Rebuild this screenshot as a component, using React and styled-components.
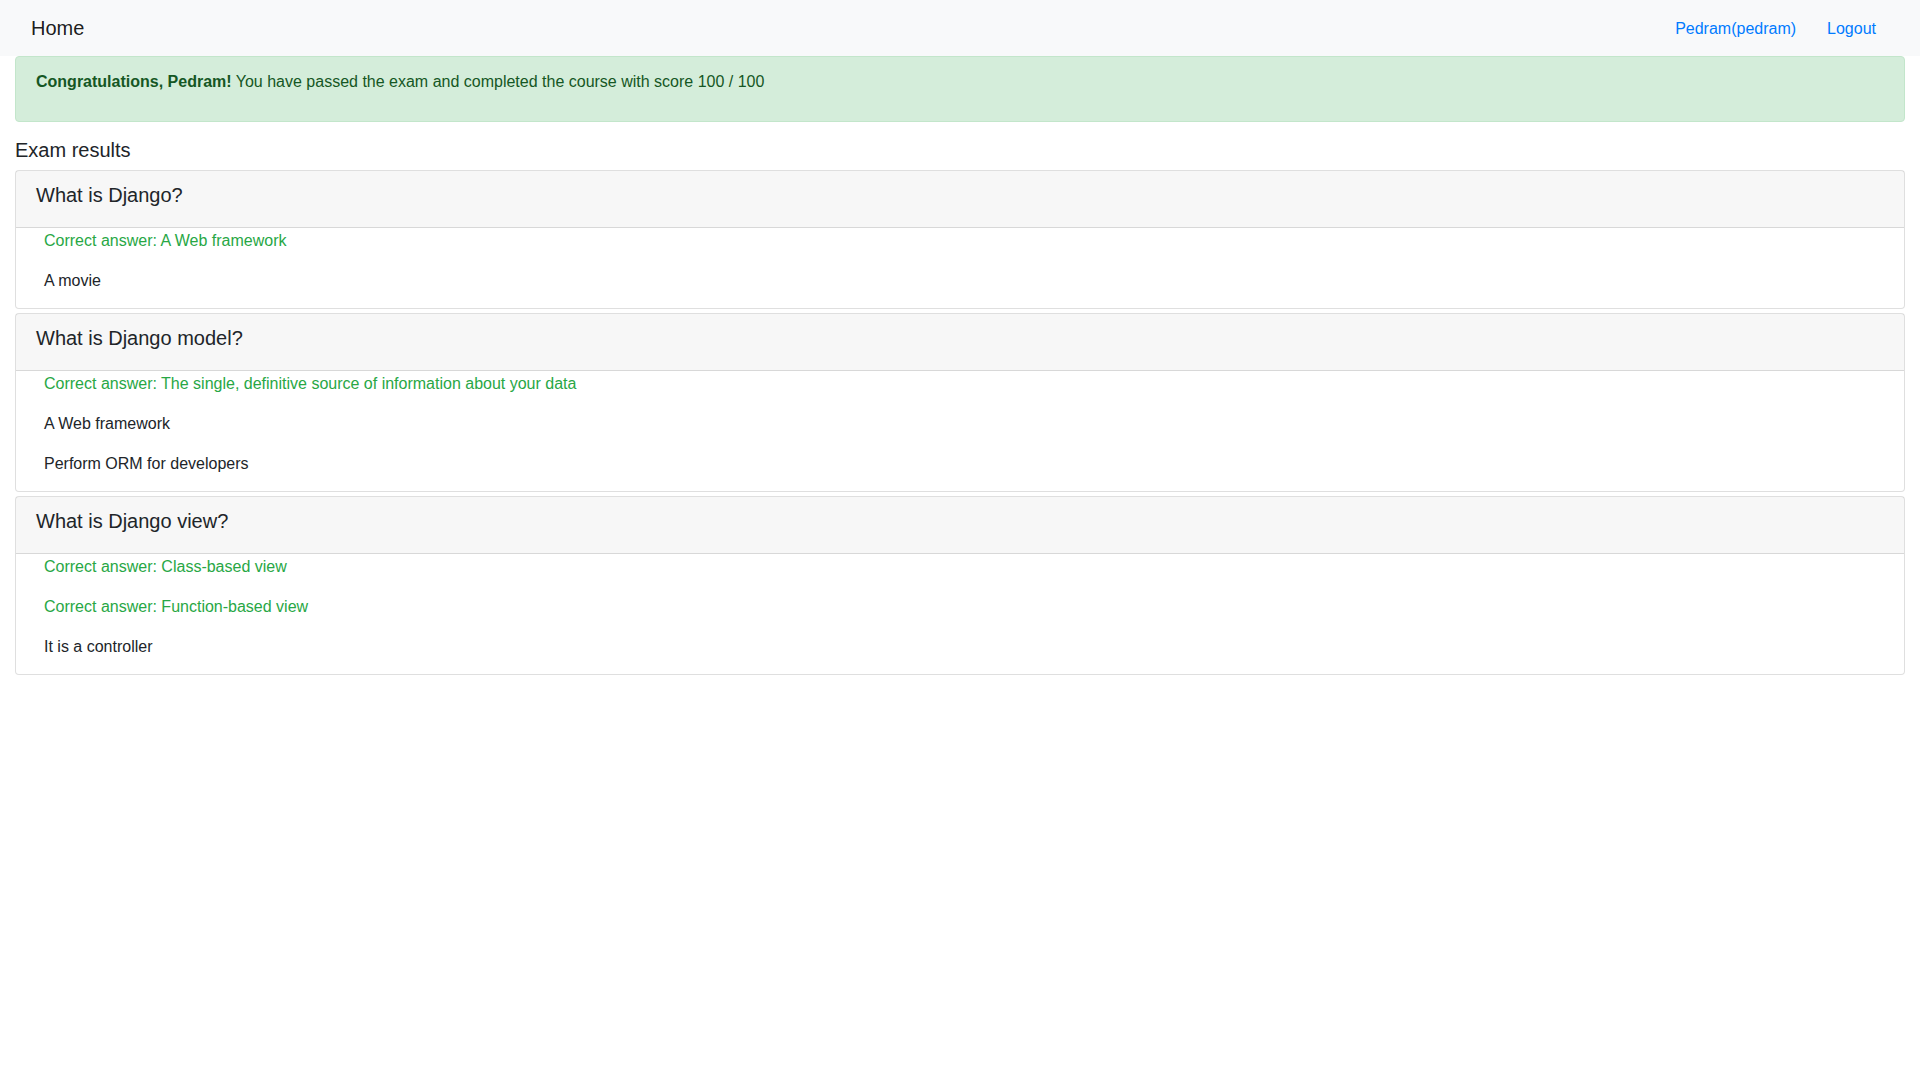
import styled, { createGlobalStyle } from 'styled-components';

const GlobalStyle = createGlobalStyle`
  * {
    box-sizing: border-box;
  }
  html, body {
    margin: 0;
    padding: 0;
    background: #fff;
  }
  body {
    font-family: "Liberation Sans", Arial, Helvetica, sans-serif;
    font-size: 16px;
    line-height: 1.5;
    color: #212529;
  }
`;

const exam = {
    user: 'Pedram',
    username: 'pedram',
    score: 100,
    total: 100,
    questions: [
        {
            text: 'What is Django?',
            choices: [
                { text: 'A Web framework', correct: true },
                { text: 'A movie', correct: false },
            ],
        },
        {
            text: 'What is Django model?',
            choices: [
                { text: 'The single, definitive source of information about your data', correct: true },
                { text: 'A Web framework', correct: false },
                { text: 'Perform ORM for developers', correct: false },
            ],
        },
        {
            text: 'What is Django view?',
            choices: [
                { text: 'Class-based view', correct: true },
                { text: 'Function-based view', correct: true },
                { text: 'It is a controller', correct: false },
            ],
        },
    ],
};

const Navbar = () => (
    <Nav>
        <NavInner>
            <Brand href="#">Home</Brand>
            <NavLinks>
                <NavLink href="#">{`${exam.user}(${exam.username})`}</NavLink>
                <NavLink href="#">Logout</NavLink>
            </NavLinks>
        </NavInner>
    </Nav>
);

const QuestionCard = ({ question }) => (
    <Card>
        <CardHeader>
            <QuestionTitle>{question.text}</QuestionTitle>
        </CardHeader>
        <CardBody>
            {question.choices.map((choice, i) => (
                <Answer key={i} correct={choice.correct}>
                    {choice.correct ? `Correct answer: ${choice.text}` : choice.text}
                </Answer>
            ))}
        </CardBody>
    </Card>
);

const App = () => {
    return (
        <>
            <GlobalStyle />
            <Navbar />
            <Container>
                <Alert>
                    <AlertText>
                        <b>Congratulations, {exam.user}!</b> You have passed the exam and
                        completed the course with score {exam.score} / {exam.total}
                    </AlertText>
                </Alert>
                <SectionTitle>Exam results</SectionTitle>
                {exam.questions.map((q, i) => (
                    <QuestionCard key={i} question={q} />
                ))}
            </Container>
        </>
    );
};

export default App;

const Nav = styled.nav`
  background-color: #f8f9fa;
  padding: 8px 16px;
`;

const NavInner = styled.div`
  display: flex;
  align-items: center;
  justify-content: space-between;
  padding: 0 15px;
  height: 40px;
`;

const Brand = styled.a`
  font-size: 20px;
  line-height: 30px;
  color: rgba(0, 0, 0, 0.9);
  text-decoration: none;
`;

const NavLinks = styled.div`
  display: flex;
  align-items: center;
  gap: 15px;
  margin-right: 5px;
  padding-top: 2px;
`;

const NavLink = styled.a`
  color: #007bff;
  text-decoration: none;
  padding: 8px;
`;

const Container = styled.div`
  padding: 0 15px;
`;

const Alert = styled.div`
  background-color: #d4edda;
  border: 1px solid #c3e6cb;
  border-radius: 4px;
  color: #155724;
  padding: 13px 20px 11px;
  margin-bottom: 16px;

  b {
    font-weight: 700;
  }
`;

const AlertText = styled.p`
  margin: 0 0 16px;
`;

const SectionTitle = styled.h5`
  font-size: 20px;
  font-weight: 500;
  line-height: 1.2;
  margin: 0 0 8px;
`;

const Card = styled.div`
  border: 1px solid rgba(0, 0, 0, 0.125);
  border-radius: 4px;
  margin-bottom: 4px;
  background: #fff;
`;

const CardHeader = styled.div`
  background-color: rgba(0, 0, 0, 0.03);
  border-bottom: 1px solid rgba(0, 0, 0, 0.125);
  padding: 12px 20px;
`;

const QuestionTitle = styled.h5`
  font-size: 20px;
  font-weight: 500;
  line-height: 1.2;
  margin: 0 0 8px;
`;

const CardBody = styled.div`
  padding: 1px 28px 0;
`;

const Answer = styled.p`
  margin: 0 0 16px;
  color: ${({ correct }) => (correct ? '#28a745' : '#212529')};

  &:last-child {
    margin-bottom: 15px;
  }
`;
